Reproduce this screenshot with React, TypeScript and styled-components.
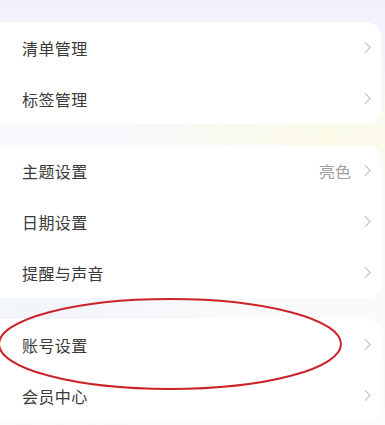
import styled, { createGlobalStyle } from 'styled-components';

const GlobalStyle = createGlobalStyle`
  html, body {
    margin: 0;
    padding: 0;
  }
  body {
    font-family: "Noto Sans CJK SC", "Noto Sans", sans-serif;
  }
`;

type Item = { label: string; value?: string };

const groups: Item[][] = [
  [{ label: '清单管理' }, { label: '标签管理' }],
  [{ label: '主题设置', value: '亮色' }, { label: '日期设置' }, { label: '提醒与声音' }],
  [{ label: '账号设置' }, { label: '会员中心' }],
];

const App = () => {
  return (
    <>
      <GlobalStyle />
      <Page>
        {groups.map((group, gi) => (
          <Card key={gi}>
            {group.map((item) => (
              <Row key={item.label}>
                <Label>{item.label}</Label>
                <Right>
                  {item.value && <Value>{item.value}</Value>}
                  <Chevron viewBox="0 0 8 14">
                    <path d="M1 1 L7 7 L1 13" />
                  </Chevron>
                </Right>
              </Row>
            ))}
          </Card>
        ))}
        <Circle viewBox="0 0 350 94">
          <ellipse cx="173" cy="47" rx="171" ry="45" />
        </Circle>
      </Page>
    </>
  );
};

const Page = styled.div`
  position: relative;
  width: 385px;
  height: 425px;
  overflow: hidden;
  padding: 22px 4px 0 0;
  box-sizing: border-box;
  display: flex;
  flex-direction: column;
  gap: 21px;
  background:
    radial-gradient(ellipse 220px 70px at 330px 136px, #fbfbe8 0%, rgba(251, 251, 232, 0) 100%),
    radial-gradient(ellipse 200px 120px at 40px 320px, #f1f5fb 0%, rgba(241, 245, 251, 0) 100%),
    linear-gradient(180deg, #f2f0fa 0%, #f9f8fc 30%, #fbfbf9 100%);
`;

const Card = styled.div`
  background: #ffffff;
  border-radius: 0 14px 14px 0;
  display: flex;
  flex-direction: column;
`;

const Row = styled.div`
  height: 51px;
  display: flex;
  align-items: center;
  justify-content: space-between;
  padding: 0 10px 0 22px;
`;

const Label = styled.span`
  font-size: 16px;
  color: #3a3a3a;
  letter-spacing: 0.4px;
`;

const Right = styled.div`
  display: flex;
  align-items: center;
  gap: 13px;
`;

const Value = styled.span`
  font-size: 16px;
  color: #a0a0a0;
`;

const Chevron = styled.svg`
  width: 7px;
  height: 13px;
  fill: none;
  stroke: #b8b8b8;
  stroke-width: 1.2;
`;

const Circle = styled.svg`
  position: absolute;
  left: -3px;
  top: 297px;
  width: 350px;
  height: 94px;
  fill: none;
  stroke: #cc2329;
  stroke-width: 2;
`;

export default App;
